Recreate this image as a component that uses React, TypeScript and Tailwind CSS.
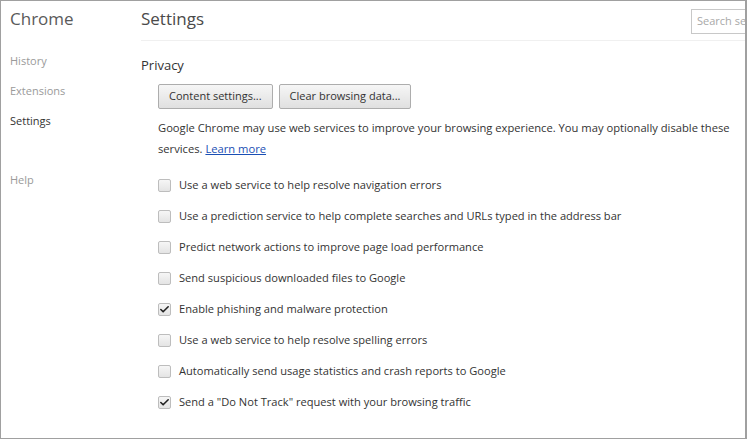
import { Check } from "lucide-react";

const options = [
  { label: "Use a web service to help resolve navigation errors", checked: false },
  { label: "Use a prediction service to help complete searches and URLs typed in the address bar", checked: false },
  { label: "Predict network actions to improve page load performance", checked: false },
  { label: "Send suspicious downloaded files to Google", checked: false },
  { label: "Enable phishing and malware protection", checked: true },
  { label: "Use a web service to help resolve spelling errors", checked: false },
  { label: "Automatically send usage statistics and crash reports to Google", checked: false },
  { label: 'Send a "Do Not Track" request with your browsing traffic', checked: true },
];

const navItems = [
  { label: "History", active: false },
  { label: "Extensions", active: false },
  { label: "Settings", active: true },
];

function Checkbox({ checked }: { checked: boolean }) {
  return (
    <span className="flex size-[13px] shrink-0 items-center justify-center rounded-[2px] border border-[#bdbdbd] bg-gradient-to-b from-[#f6f6f6] to-[#e4e4e4]">
      {checked && <Check className="size-[11px] text-[#222]" strokeWidth={3.5} />}
    </span>
  );
}

export default function App() {
  return (
    <div className="h-[441px] w-[747px] overflow-hidden bg-white font-['Open_Sans',sans-serif] text-[#303030]">
      <div className="flex h-[439px] w-[747px] border-y border-l border-r-2 border-[#a0a0a0]">
        <aside className="w-[140px] shrink-0 pl-[9px] pt-[6px]">
          <h1 className="text-[17px] leading-[24px] text-[#5a5a5a]">Chrome</h1>
          <nav className="mt-[22px] flex flex-col text-[11px] text-[#9a9a9a]">
            {navItems.map((item) => (
              <span
                key={item.label}
                className={item.active ? "h-[30px] text-[#333]" : "h-[30px]"}
              >
                {item.label}
              </span>
            ))}
            <span className="mt-[29px]">Help</span>
          </nav>
        </aside>

        <main className="min-w-0 flex-1">
          <header className="flex h-[40px] items-start justify-between border-b border-[#f0f0f0] pt-[6px]">
            <h2 className="text-[17px] leading-[24px] text-[#4a4a4a]">Settings</h2>
            <div className="mt-[2px] flex h-[25px] w-[54px] items-center overflow-hidden whitespace-nowrap border border-r-0 border-[#c8c8c8] pl-[5px] text-[11px] text-[#a8a8a8]">
              Search settings
            </div>
          </header>

          <section className="pt-[14px]">
            <h3 className="text-[13px] leading-[20px] text-[#333]">Privacy</h3>
            <div className="ml-[17px] mt-[9px] flex gap-[6px] text-[11px]">
              <button className="h-[25px] rounded-[2px] border border-[#adadad] bg-gradient-to-b from-[#f6f6f6] to-[#e0e0e0] px-[10px] text-[#333]">
                Content settings...
              </button>
              <button className="h-[25px] rounded-[2px] border border-[#adadad] bg-gradient-to-b from-[#f6f6f6] to-[#e0e0e0] px-[10px] text-[#333]">
                Clear browsing data...
              </button>
            </div>

            <p className="ml-[17px] mt-[8px] pr-[8px] text-[11.2px] leading-[21px] text-[#333]">
              Google Chrome may use web services to improve your browsing experience. You may optionally disable these
              services. <span className="text-[#1a4fb4] underline">Learn more</span>
            </p>

            <ul className="ml-[17px] mt-[11px] flex flex-col text-[11.1px] text-[#333]">
              {options.map((opt) => (
                <li key={opt.label} className="flex h-[31px] items-center gap-[8px]">
                  <Checkbox checked={opt.checked} />
                  <span>{opt.label}</span>
                </li>
              ))}
            </ul>
          </section>
        </main>
      </div>
    </div>
  );
}
